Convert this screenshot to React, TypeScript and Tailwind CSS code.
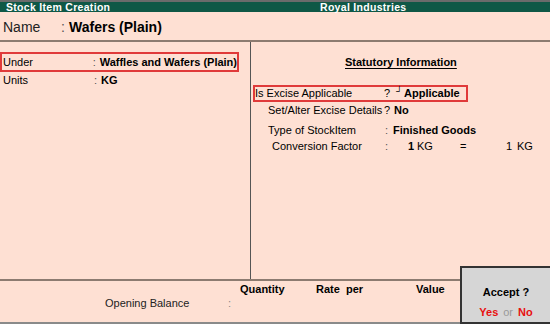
export default function App() {
  const font = { fontFamily: '"Liberation Sans", Arial, sans-serif' };
  return (
    <div
      className="relative w-[550px] h-[324px] overflow-hidden bg-[#fee0d3] text-black flex flex-col whitespace-nowrap"
      style={font}
    >
      {/* title bar */}
      <div className="h-[2px] bg-[#6b6b6b]" />
      <div className="h-[10px] bg-[#0f5846] flex items-center text-white font-bold text-[10.5px] leading-[10px] tracking-[0.3px]">
        <span className="pl-[6px] w-[320px]">Stock Item Creation</span>
        <span>Royal Industries</span>
      </div>

      {/* name row */}
      <div className="h-[28px] flex items-center text-[14px] pt-[2px]">
        <span className="pl-[3px] w-[61px] text-[#222]">Name</span>
        <span className="w-[8px] text-[#555]">:</span>
        <span className="font-bold">Wafers (Plain)</span>
      </div>
      <div className="h-[2px] bg-[#8c7b70]" />

      {/* body */}
      <div className="h-[237px] flex">
        <div className="w-[251px] border-r border-[#555] pt-[10px] text-[11px]">
          <div className="w-[239px] h-[20px] border-2 border-[#e03a3a] flex items-center">
            <span className="pl-[1px] w-[92px]">Under</span>
            <span className="w-[7px] text-[#555]">:</span>
            <span className="font-bold">Waffles and Wafers (Plain)</span>
          </div>
          <div className="h-[17px] flex items-center">
            <span className="pl-[3px] w-[94px]">Units</span>
            <span className="w-[7px] text-[#555]">:</span>
            <span className="font-bold">KG</span>
          </div>
        </div>

        <div className="flex-1 text-[11px] pt-[12px]">
          <div className="pl-[94px] h-[15px]">
            <span className="font-bold underline underline-offset-2">Statutory Information</span>
          </div>
          <div className="mt-[16px] ml-[2px] w-[215px] h-[17px] border-2 border-[#e03a3a] flex items-center">
            <span className="w-[129px]">Is Excise Applicable</span>
            <span className="w-[12px]">?</span>
            <span className="w-[8px] text-[9px] leading-none -mt-[4px]">┘</span>
            <span className="font-bold">Applicable</span>
          </div>
          <div className="h-[16px] flex items-center pl-[17px]">
            <span className="w-[116px]">Set/Alter Excise Details</span>
            <span className="w-[10px]">?</span>
            <span className="font-bold">No</span>
          </div>
          <div className="mt-[4px] h-[17px] flex items-center pl-[17px]">
            <span className="w-[117px]">Type of StockItem</span>
            <span className="w-[8px] text-[#555]">:</span>
            <span className="font-bold">Finished Goods</span>
          </div>
          <div className="h-[14px] flex items-center pl-[21px]">
            <span className="w-[113px]">Conversion Factor</span>
            <span className="w-[23px] text-[#555]">:</span>
            <span className="w-[9px] font-bold">1</span>
            <span className="w-[43px]">KG</span>
            <span className="w-[46px]">=</span>
            <span className="w-[11px]">1</span>
            <span>KG</span>
          </div>
        </div>
      </div>
      <div className="h-[2px] bg-[#8c7b70]" />

      {/* opening balance */}
      <div className="flex-1 text-[11px]">
        <div className="h-[14px] flex items-center font-bold pt-[2px]">
          <span className="pl-[240px] w-[316px]">Quantity</span>
          <span className="w-[100px]">Rate&nbsp; per</span>
          <span>Value</span>
        </div>
        <div className="h-[16px] flex items-center">
          <span className="pl-[105px] w-[228px] text-[#222]">Opening Balance</span>
          <span className="text-[#888]">:</span>
        </div>
      </div>
      <div className="h-[2px] bg-[#8a8a8a]" />

      {/* accept box */}
      <div className="absolute right-0 top-[266px] w-[90px] h-[58px] bg-[#d6d6d6] border-2 border-[#333] border-r-0 flex flex-col items-center text-[11px] font-bold">
        <span className="mt-[16px]">Accept ?</span>
        <span className="mt-auto mb-[2px]">
          <span className="text-[#e81010]">Yes</span>
          <span className="text-[#999] font-normal mx-[5px]">or</span>
          <span className="text-[#e81010]">No</span>
        </span>
      </div>
    </div>
  );
}
